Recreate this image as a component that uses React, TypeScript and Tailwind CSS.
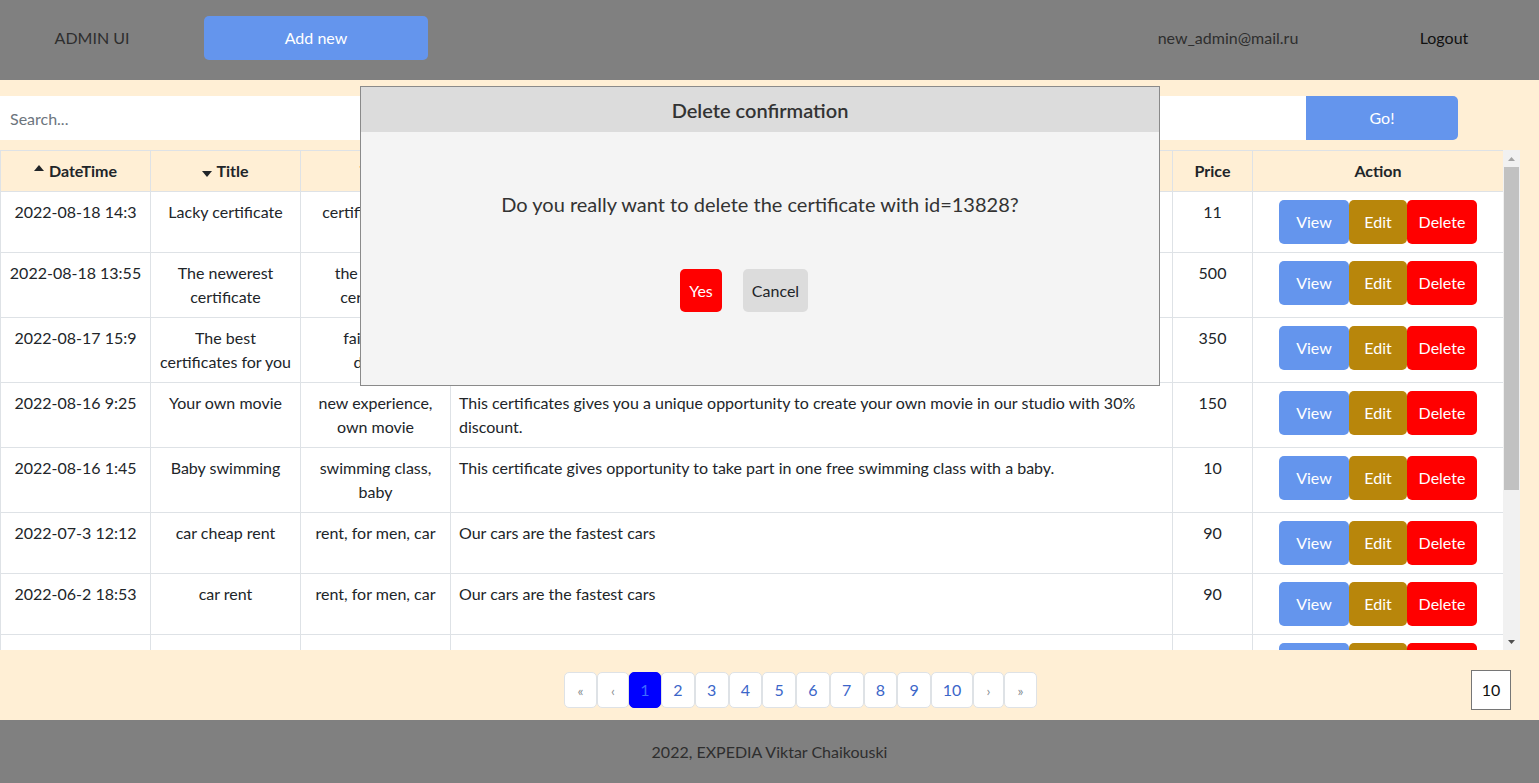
import React from 'react'

type Row = {
  date: string
  title: string[]
  tags: string[]
  desc: string[]
  price: string
}

const rows: Row[] = [
  { date: '2022-08-18 14:3', title: ['Lacky certificate'], tags: ['certificate, luck'], desc: ['This certificate brings you luck for the whole year.'], price: '11' },
  { date: '2022-08-18 13:55', title: ['The newerest', 'certificate'], tags: ['the newest,', 'certificate'], desc: ['The newest certificate in our shop.'], price: '500' },
  { date: '2022-08-17 15:9', title: ['The best', 'certificates for you'], tags: ['fairy tale,', 'dream'], desc: ['The best certificates for you and your family.'], price: '350' },
  { date: '2022-08-16 9:25', title: ['Your own movie'], tags: ['new experience,', 'own movie'], desc: ['This certificates gives you a unique opportunity to create your own movie in our studio with 30%', 'discount.'], price: '150' },
  { date: '2022-08-16 1:45', title: ['Baby swimming'], tags: ['swimming class,', 'baby'], desc: ['This certificate gives opportunity to take part in one free swimming class with a baby.'], price: '10' },
  { date: '2022-07-3 12:12', title: ['car cheap rent'], tags: ['rent, for men, car'], desc: ['Our cars are the fastest cars'], price: '90' },
  { date: '2022-06-2 18:53', title: ['car rent'], tags: ['rent, for men, car'], desc: ['Our cars are the fastest cars'], price: '90' },
  { date: '', title: ['the fishing'], tags: ['rest, fishing, lake'], desc: ['The certificate allows you to go to the fishing area at the weekend.'], price: '45' },
]

const pages = ['1', '2', '3', '4', '5', '6', '7', '8', '9', '10']

function Lines({ lines }: { lines: string[] }) {
  return (
    <>
      {lines.map((l, i) => (
        <div key={i} className="whitespace-nowrap">{l}</div>
      ))}
    </>
  )
}

function Caret({ up }: { up?: boolean }) {
  return (
    <svg width="10" height="6" viewBox="0 0 10 6" className={up ? '-translate-y-[3px]' : 'translate-y-[3px]'}>
      {up ? <path d="M0 6 L5 0 L10 6 Z" fill="#212529" /> : <path d="M0 0 L10 0 L5 6 Z" fill="#212529" />}
    </svg>
  )
}

const navBox = 'h-[36px] flex items-center justify-center bg-white border border-[#dee2e6] rounded-[5px] text-[14px] text-[#8a8f94]'

export default function App() {
  return (
    <div
      className="relative flex flex-col h-[783px] text-[16px] text-[#212529]"
      style={{ fontFamily: 'Lato, "Open Sans", sans-serif' }}
    >
      {/* header */}
      <header className="h-[80px] pb-[4px] bg-[#808080] flex items-center">
        <div className="w-[184px] text-center text-[#2e2e2e]">ADMIN UI</div>
        <button className="ml-[20px] w-[224px] h-[44px] rounded-[5px] bg-[#6495ed] text-white">Add new</button>
        <div className="ml-auto w-[200px] text-center text-[#2e2e2e]">new_admin@mail.ru</div>
        <div className="ml-[66px] mr-[45px] w-[100px] text-center text-[#111]">Logout</div>
      </header>

      {/* main */}
      <main className="flex-1 bg-[#ffefd5] flex flex-col">
        <div className="mt-[16px] flex h-[44px]">
          <input
            placeholder="Search..."
            className="w-[1306px] h-full bg-white px-[10px] outline-none placeholder:text-[#6c757d]"
          />
          <button className="w-[152px] h-full bg-[#6495ed] text-white rounded-r-[5px]">Go!</button>
        </div>

        <div className="mt-[10px] flex w-[1520px] h-[500px]">
          <div className="w-[1503px] h-full overflow-hidden">
            <table className="w-[1503px] table-fixed border-collapse">
              <colgroup>
                <col className="w-[150px]" />
                <col className="w-[150px]" />
                <col className="w-[150px]" />
                <col className="w-[722px]" />
                <col className="w-[80px]" />
                <col className="w-[251px]" />
              </colgroup>
              <thead>
                <tr className="h-[41px] bg-[#ffefd5] font-bold">
                  <th className="border border-[#dee2e6] px-2 align-middle">
                    <div className="flex items-center justify-center gap-[5px]"><Caret up />DateTime</div>
                  </th>
                  <th className="border border-[#dee2e6] px-2 align-middle">
                    <div className="flex items-center justify-center gap-[4px]"><Caret />Title</div>
                  </th>
                  <th className="border border-[#dee2e6] px-2 align-middle">Tags</th>
                  <th className="border border-[#dee2e6] px-2 align-middle">Description</th>
                  <th className="border border-[#dee2e6] px-2 align-middle">Price</th>
                  <th className="border border-[#dee2e6] px-2 align-middle">Action</th>
                </tr>
              </thead>
              <tbody className="bg-white">
                {rows.map((r, i) => (
                  <tr key={i} className="leading-[24px]">
                    <td className="border border-[#dee2e6] px-2 py-2 align-top text-center"><Lines lines={[r.date]} /></td>
                    <td className="border border-[#dee2e6] px-2 py-2 align-top text-center"><Lines lines={r.title} /></td>
                    <td className="border border-[#dee2e6] px-2 py-2 align-top text-center"><Lines lines={r.tags} /></td>
                    <td className="border border-[#dee2e6] px-2 py-2 align-top"><Lines lines={r.desc} /></td>
                    <td className="border border-[#dee2e6] px-2 py-2 align-top text-center">{r.price}</td>
                    <td className="border border-[#dee2e6] px-2 py-2 align-top">
                      <div className="flex justify-center text-white">
                        <button className="w-[70px] h-[44px] rounded-[5px] bg-[#6495ed]">View</button>
                        <button className="w-[58px] h-[44px] rounded-[5px] bg-[#b8860b]">Edit</button>
                        <button className="w-[70px] h-[44px] rounded-[5px] bg-[#ff0000]">Delete</button>
                      </div>
                    </td>
                  </tr>
                ))}
              </tbody>
            </table>
          </div>
          {/* scrollbar */}
          <div className="w-[17px] h-full bg-[#f1f1f1] flex flex-col items-center">
            <div className="h-[17px] flex items-center justify-center">
              <svg width="7" height="4" viewBox="0 0 7 4"><path d="M0 4 L3.5 0 L7 4 Z" fill="#a3a3a3" /></svg>
            </div>
            <div className="w-[15px] h-[323px] bg-[#c1c1c1]" />
            <div className="flex-1" />
            <div className="h-[17px] flex items-center justify-center">
              <svg width="7" height="4" viewBox="0 0 7 4"><path d="M0 0 L7 0 L3.5 4 Z" fill="#505050" /></svg>
            </div>
          </div>
        </div>

        {/* pagination */}
        <div className="flex-1 flex items-center justify-between pt-[10px] pl-[564px] pr-[28px]">
          <div className="flex">
            <span className={`w-[33px] ${navBox}`}>«</span>
            <span className={`w-[32px] ${navBox}`}>‹</span>
            {pages.map(p => (
              <span
                key={p}
                className={
                  p === '1'
                    ? 'w-[32px] h-[36px] flex items-center justify-center bg-[#0000ff] border border-[#0000ff] rounded-[5px] text-[#3d6bff]'
                    : p === '10'
                      ? 'w-[42px] h-[36px] flex items-center justify-center bg-white border border-[#dee2e6] rounded-[5px] text-[#3b66c9]'
                      : 'w-[33.75px] h-[36px] flex items-center justify-center bg-white border border-[#dee2e6] rounded-[5px] text-[#3b66c9]'
                }
              >
                {p}
              </span>
            ))}
            <span className={`w-[31px] ${navBox}`}>›</span>
            <span className={`w-[33px] ${navBox}`}>»</span>
          </div>
          <div className="w-[40px] h-[40px] flex items-center justify-center bg-white border border-[#767676] text-[#111]">10</div>
        </div>
      </main>

      {/* footer */}
      <footer className="h-[63px] bg-[#808080] flex items-center justify-center text-[#2e2e2e]">
        2022, EXPEDIA Viktar Chaikouski
      </footer>

      {/* delete confirmation modal */}
      <div className="absolute left-[360px] top-[86px] w-[800px] h-[300px] border border-[#8a8a8a] bg-[#f4f4f4] flex flex-col">
        <div className="h-[45px] bg-[#dcdcdc] flex items-center justify-center text-[20px] font-semibold text-[#333]">
          Delete confirmation
        </div>
        <div className="flex flex-col items-center">
          <p className="mt-[57px] text-[20px] text-[#333]">Do you really want to delete the certificate with id=13828?</p>
          <div className="mt-[50px] mr-[32px] flex gap-[21px]">
            <button className="w-[42px] h-[43px] rounded-[5px] bg-[#ff0000] text-white">Yes</button>
            <button className="w-[65px] h-[43px] rounded-[5px] bg-[#dcdcdc] text-[#212529]">Cancel</button>
          </div>
        </div>
      </div>
    </div>
  )
}
